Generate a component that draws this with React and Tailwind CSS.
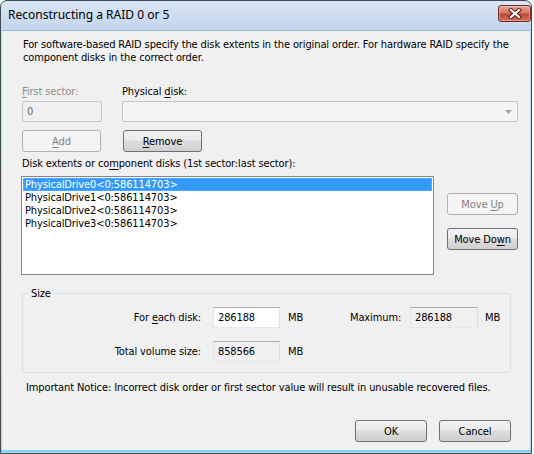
import React from "react";

const F = "font-['DejaVu_Sans_Condensed','DejaVu_Sans',sans-serif] tracking-[-0.12px]";

function U({ children }) {
  return <span className="underline underline-offset-[2px] decoration-[1px]">{children}</span>;
}

function Btn({ children, disabled, className = "" }) {
  const base = "h-[22px] flex items-center justify-center rounded-[3px] border leading-[13px] text-[11px]";
  const st = disabled
    ? "border-[#adb2b5] bg-[#f4f4f4] text-[#838383]"
    : "border-[#707070] bg-[linear-gradient(#f2f2f2,#ebebeb_45%,#dddddd_50%,#cfcfcf)] text-black";
  return (
    <div className={`${base} ${st} ${className}`}>
      <span className="whitespace-pre">{children}</span>
    </div>
  );
}

function Field({ children, w, ro, className = "" }) {
  return (
    <div
      className={`h-[21px] border border-[#abadb3] border-r-[#dbdfe6] border-b-[#e3e9ef] border-l-[#e2e3ea] px-[4px] leading-[19px] ${
        ro ? "bg-[#f0f0f0]" : "bg-white"
      } ${w} ${className}`}
    >
      {children}
    </div>
  );
}

const drives = [
  "PhysicalDrive0<0:586114703>",
  "PhysicalDrive1<0:586114703>",
  "PhysicalDrive2<0:586114703>",
  "PhysicalDrive3<0:586114703>",
];

export default function App() {
  return (
    <div className="w-[534px] h-[454px] bg-white overflow-hidden">
      <div className="w-[532px] h-[454px] flex flex-col border border-[#404b58] rounded-t-[7px] bg-[linear-gradient(#d9e5f4,#c3d5ec_30px,#b9cfe8)] overflow-hidden">
        {/* Title bar */}
        <div className="h-[29px] flex items-start pl-[7px] shrink-0">
          <div className="mt-[6px] font-['Noto_Sans',sans-serif] text-[12px] leading-[16px] text-black">
            Reconstructing a RAID 0 or 5
          </div>
          <div className="ml-auto mt-[4px] w-[33px] h-[17px] rounded-[3px] border border-[#6e2a22] bg-[linear-gradient(#e3a697,#d07a66_45%,#bf4a36_55%,#d0705a)] flex items-center justify-center shadow-[inset_0_0_0_1px_rgba(255,255,255,0.3)]">
            <svg width="14" height="11" viewBox="0 0 14 11">
              <path d="M3 2 L11 9 M11 2 L3 9" stroke="#5a1d16" strokeWidth="4.2" strokeLinecap="square" />
              <path d="M3 2 L11 9 M11 2 L3 9" stroke="#ffffff" strokeWidth="2.2" strokeLinecap="square" />
            </svg>
          </div>
        </div>

        {/* Client area */}
        <div className={`flex-1 ml-[1px] mr-[1px] mb-[3px] bg-[#f0f0f0] border-t border-[#9fb6d2] flex flex-col pl-[20px] pr-[12px] pt-[7px] text-[11px] leading-[13px] text-black ${F}`}>
          <p className="ml-[1px]">
            For software-based RAID specify the disk extents in the original order. For hardware RAID specify the
            component disks in the correct order.
          </p>

          <div className="flex mt-[21px]">
            <div className="w-[80px] flex flex-col">
              <div className="text-[#8d8d8d]">
                <U>F</U>irst sector:
              </div>
              <div className="mt-[3px] h-[21px] border border-[#c3c5c9] rounded-[2px] bg-[#f0f0f0] px-[4px] leading-[19px] text-[#6d6d6d]">
                0
              </div>
            </div>
            <div className="ml-[20px] flex-1 flex flex-col">
              <div>
                Physical <U>d</U>isk:
              </div>
              <div className="mt-[3px] h-[21px] border border-[#c5c5c5] rounded-[2px] bg-[#f4f4f4] flex items-center justify-end pr-[5px]">
                <svg width="7" height="4" viewBox="0 0 7 4">
                  <path d="M0 0 H7 L3.5 4 Z" fill="#a6a6a6" />
                </svg>
              </div>
            </div>
          </div>

          <div className="flex mt-[8px]">
            <Btn disabled className="w-[79px]">
              <U>A</U>dd
            </Btn>
            <Btn className="w-[79px] ml-[22px]">
              <U>R</U>emove
            </Btn>
          </div>

          <div className="mt-[5px]">
            Disk extents or co<U>m</U>ponent disks (1st sector:last sector):
          </div>

          <div className="flex mt-[6px]">
            <div className="-ml-[1px] w-[414px] h-[99px] border border-[#828790] bg-white p-[1px]">
              {drives.map((d, i) => (
                <div
                  key={d}
                  className={`h-[13px] leading-[11px] pl-[1px] ${
                    i === 0 ? "bg-[#3399ff] text-white border border-dotted border-[#e8a23c]" : "border border-transparent"
                  }`}
                >
                  {d}
                </div>
              ))}
            </div>
            <div className="ml-[13px] flex flex-col">
              <Btn disabled className="w-[71px] mt-[17px]">
                {"Move "}
                <U>U</U>p
              </Btn>
              <Btn className="w-[71px] mt-[13px]">
                Move Do<U>w</U>n
              </Btn>
            </div>
          </div>

          <div className="relative mt-[18px] w-[489px] h-[80px] border border-[#d5dfe5] rounded-[3px]">
            <div className="absolute -top-[7px] left-[5px] px-[3px] bg-[#f0f0f0] leading-[13px]">Size</div>
            <div className="flex items-center mt-[13px]">
              <div className="w-[178px] text-right">
                For <U>e</U>ach disk:
              </div>
              <Field w="w-[67px]" className="ml-[12px]">286188</Field>
              <div className="ml-[8px] w-[62px]">MB</div>
              <div className="w-[60px]">Maximum:</div>
              <Field w="w-[68px]" ro>286188</Field>
              <div className="ml-[7px]">MB</div>
            </div>
            <div className="flex items-center mt-[13px]">
              <div className="w-[178px] text-right">Total volume size:</div>
              <Field w="w-[67px]" className="ml-[12px]" ro>
                858566
              </Field>
              <div className="ml-[8px]">MB</div>
            </div>
          </div>

          <div className="mt-[8px] ml-[4px]">
            Important Notice: Incorrect disk order or first sector value will result in unusable recovered files.
          </div>

          <div className="flex justify-end mt-[26px] pr-[7px]">
            <Btn className="w-[72px]">OK</Btn>
            <Btn className="w-[72px] ml-[12px]">Cancel</Btn>
          </div>
        </div>
        <div className="h-[2px] bg-[#7dd3ee] shrink-0 -mt-[3px] mb-[1px]" />
      </div>
    </div>
  );
}
